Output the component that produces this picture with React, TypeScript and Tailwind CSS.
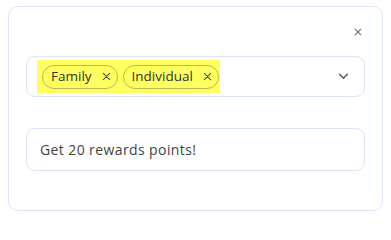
import React from 'react'

const XIcon = ({ className }: { className?: string }) => (
  <svg viewBox="0 0 10 10" className={className} fill="none" stroke="currentColor" strokeWidth={1.3} strokeLinecap="round">
    <path d="M1.5 1.5l7 7M8.5 1.5l-7 7" />
  </svg>
)

const Chip = ({ label }: { label: string }) => (
  <div className="flex h-6 items-center gap-[10px] rounded-full border border-[#b9b95a] pl-[8px] pr-[6px] text-[13.5px] text-[#333]">
    <span>{label}</span>
    <XIcon className="h-[9px] w-[9px] text-[#555]" />
  </div>
)

export default function App() {
  return (
    <div className="h-[218px] w-[391px] bg-white pl-[8px] pt-[6px] font-['Open_Sans',sans-serif]">
      <div className="flex h-[205px] w-[375px] flex-col rounded-[10px] border border-[#dde6f7] px-[17px]">
        <div className="flex justify-end pt-[21px] pr-[3px]">
          <XIcon className="h-[8px] w-[8px] text-[#666]" />
        </div>
        <div className="mt-[20px] flex h-[41px] items-center justify-between rounded-[9px] border border-[#dde6f7] pl-[10px] pr-[15px]">
          <div className="flex h-[33px] w-[183px] items-center gap-[5px] bg-[#ffff5f] pl-[5px]">
            <Chip label="Family" />
            <Chip label="Individual" />
          </div>
          <svg viewBox="0 0 12 8" className="h-[7px] w-[11px] text-[#555]" fill="none" stroke="currentColor" strokeWidth={1.6} strokeLinecap="round" strokeLinejoin="round">
            <path d="M1.5 1.5L6 6l4.5-4.5" />
          </svg>
        </div>
        <div className="mt-[31px] flex h-[43px] items-center rounded-[9px] border border-[#dde6f7] pl-[13px] text-[14px] tracking-[0.4px] text-[#444]">
          Get 20 rewards points!
        </div>
      </div>
    </div>
  )
}
